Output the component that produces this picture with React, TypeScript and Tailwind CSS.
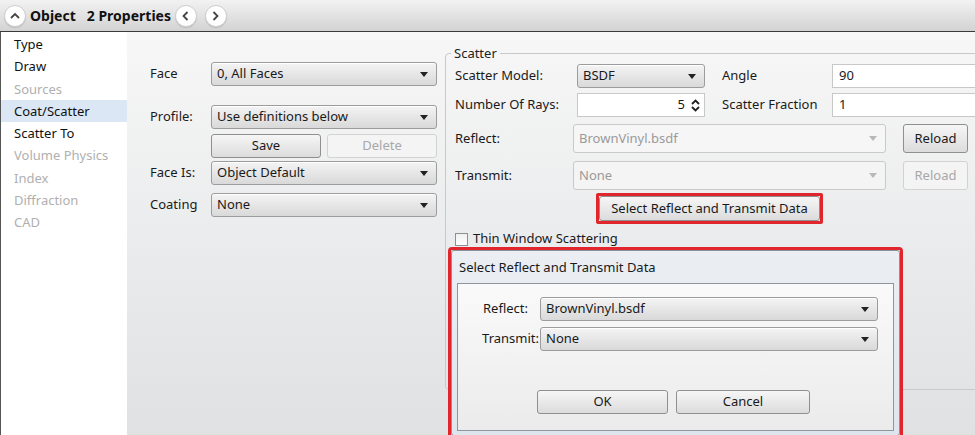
import React from "react";

const F = { fontFamily: '"Noto Sans", "Open Sans", sans-serif' };

function Arrow({ disabled }: { disabled?: boolean }) {
  return (
    <svg width="8" height="5" viewBox="0 0 8 5" className="shrink-0">
      <path d="M0 0 L8 0 L4 5 Z" fill={disabled ? "#b8b8b8" : "#222"} />
    </svg>
  );
}

function Combo({
  value,
  className = "",
  disabled,
}: {
  value: string;
  className?: string;
  disabled?: boolean;
}) {
  return (
    <div
      className={
        "flex items-center justify-between pl-[5px] pr-[8px] rounded-[3px] border " +
        (disabled
          ? "border-[#c9c9c9] bg-[#f4f4f4] text-[#9a9a9a] "
          : "border-[#9c9c9c] bg-gradient-to-b from-[#f4f4f4] to-[#d9d9d9] text-[#1a1a1a] shadow-[inset_0_1px_0_#ffffff] ") +
        className
      }
    >
      <span>{value}</span>
      <Arrow disabled={disabled} />
    </div>
  );
}

function Btn({
  label,
  className = "",
  disabled,
}: {
  label: string;
  className?: string;
  disabled?: boolean;
}) {
  return (
    <div
      className={
        "flex items-center justify-center rounded-[3px] border " +
        (disabled
          ? "border-[#d2d2d2] bg-[#f4f4f4] text-[#a8a8a8] "
          : "border-[#8f8f8f] bg-gradient-to-b from-[#f6f6f6] to-[#dcdcdc] text-[#1a1a1a] ") +
        className
      }
    >
      {label}
    </div>
  );
}

function Circle({ children }: { children: React.ReactNode }) {
  return (
    <div className="w-[22px] h-[22px] rounded-full bg-white border border-[#cfcfcf] flex items-center justify-center shadow-[0_1px_1px_rgba(0,0,0,0.12)]">
      {children}
    </div>
  );
}

export default function App() {
  const items: [string, string][] = [
    ["Type", "n"],
    ["Draw", "n"],
    ["Sources", "d"],
    ["Coat/Scatter", "s"],
    ["Scatter To", "n"],
    ["Volume Physics", "d"],
    ["Index", "d"],
    ["Diffraction", "d"],
    ["CAD", "d"],
  ];
  return (
    <div
      style={F}
      className="relative w-[975px] h-[435px] overflow-hidden flex flex-col text-[13px] text-[#1a1a1a] bg-white"
    >
      {/* header */}
      <div className="h-[31px] shrink-0 flex items-center pl-[4px] bg-gradient-to-b from-[#f2f2f2] to-[#d3d3d3]">
        <Circle>
          <svg width="10" height="7" viewBox="0 0 10 7">
            <path d="M1 6 L5 2 L9 6" stroke="#444" strokeWidth="1.8" fill="none" />
          </svg>
        </Circle>
        <span className="ml-[4px] font-bold text-[14px] text-[#111]">Object</span>
        <span className="ml-[11px] font-bold text-[14px] text-[#111]">2 Properties</span>
        <div className="ml-[4px] flex gap-[8px]">
          <Circle>
            <svg width="7" height="10" viewBox="0 0 7 10">
              <path d="M5.5 1 L1.5 5 L5.5 9" stroke="#444" strokeWidth="1.8" fill="none" />
            </svg>
          </Circle>
          <Circle>
            <svg width="7" height="10" viewBox="0 0 7 10">
              <path d="M1.5 1 L5.5 5 L1.5 9" stroke="#444" strokeWidth="1.8" fill="none" />
            </svg>
          </Circle>
        </div>
      </div>

      {/* body */}
      <div className="flex flex-1 border-t border-[#3a3a3a]">
        {/* left list */}
        <div className="w-[127px] shrink-0 bg-white border-l border-[#555] pt-[1px]">
          {items.map(([t, k]) => (
            <div
              key={t}
              className={
                "h-[22.3px] leading-[22px] pl-[13px] " +
                (k === "s"
                  ? "bg-[#dce7f5] text-[#111]"
                  : k === "d"
                  ? "text-[#b0b0b0]"
                  : "text-[#111]")
              }
            >
              {t}
            </div>
          ))}
        </div>

        {/* main area */}
        <div className="flex flex-1 bg-gradient-to-b from-[#f7f7f7] to-[#dfe1e3]">
          {/* middle form */}
          <div className="w-[318px] shrink-0 pt-[30px] pl-[23px]">
            <div className="flex items-center h-[24px]">
              <span className="w-[61px]">Face</span>
              <Combo value="0, All Faces" className="w-[226px] h-[24px]" />
            </div>
            <div className="flex items-center h-[24px] mt-[19px]">
              <span className="w-[61px]">Profile:</span>
              <Combo value="Use definitions below" className="w-[226px] h-[24px]" />
            </div>
            <div className="flex h-[24px] mt-[5px] ml-[61px] gap-[6px]">
              <Btn label="Save" className="w-[110px] h-[24px]" />
              <Btn label="Delete" disabled className="w-[110px] h-[24px]" />
            </div>
            <div className="flex items-center h-[24px] mt-[3px]">
              <span className="w-[61px]">Face Is:</span>
              <Combo value="Object Default" className="w-[226px] h-[24px]" />
            </div>
            <div className="flex items-center h-[24px] mt-[8px]">
              <span className="w-[61px]">Coating</span>
              <Combo value="None" className="w-[226px] h-[24px]" />
            </div>
          </div>

          {/* scatter group */}
          <div className="flex-1 min-w-0">
            <fieldset className="mt-[12px] h-[346px] w-[560px] border border-[#c9c9c9] rounded-[4px] pl-[9px] pr-0">
              <legend className="ml-[-4px] px-[3px] leading-[18px] text-[#222]">Scatter</legend>
              <div className="flex items-center h-[24px] mt-[2px]">
                <span className="w-[122px]">Scatter Model:</span>
                <Combo value="BSDF" className="w-[128px] h-[24px]" />
                <span className="ml-[17px] w-[110px]">Angle</span>
                <div className="w-[160px] h-[24px] bg-white border border-[#c8c8c8] flex items-center pl-[6px]">90</div>
              </div>
              <div className="flex items-center h-[24px] mt-[5px]">
                <span className="w-[122px]">Number Of Rays:</span>
                <div className="w-[128px] h-[24px] bg-white border border-[#c8c8c8] flex items-center justify-end pr-[4px] gap-[6px]">
                  <span>5</span>
                  <svg width="9" height="13" viewBox="0 0 9 13">
                    <path d="M1 5 L4.5 1.5 L8 5" stroke="#222" strokeWidth="1.8" fill="none" />
                    <path d="M1 8 L4.5 11.5 L8 8" stroke="#222" strokeWidth="1.8" fill="none" />
                  </svg>
                </div>
                <span className="ml-[17px] w-[110px]">Scatter Fraction</span>
                <div className="w-[160px] h-[24px] bg-white border border-[#c8c8c8] flex items-center pl-[6px]">1</div>
              </div>
              <div className="flex items-center h-[29px] mt-[7px]">
                <span className="w-[118px]">Reflect:</span>
                <Combo value="BrownVinyl.bsdf" disabled className="w-[313px] h-[29px] bg-[#f6f6f6]" />
                <Btn label="Reload" className="ml-[17px] w-[65px] h-[29px]" />
              </div>
              <div className="flex items-center h-[29px] mt-[8px]">
                <span className="w-[118px]">Transmit:</span>
                <Combo value="None" disabled className="w-[313px] h-[29px]" />
                <Btn label="Reload" disabled className="ml-[17px] w-[65px] h-[29px]" />
              </div>
              <div className="ml-[141px] mt-[3px] w-[227px] h-[31px] border-[3px] border-[#e0262c] rounded-[2px] flex">
                <Btn label="Select Reflect and Transmit Data" className="flex-1 rounded-[2px]" />
              </div>
              <div className="flex items-center mt-[8px] h-[14px]">
                <div className="w-[13px] h-[13px] border border-[#8e8f8f] bg-gradient-to-b from-[#f0f0f0] to-[#ffffff]" />
                <span className="ml-[5px]">Thin Window Scattering</span>
              </div>
            </fieldset>
          </div>
        </div>
      </div>

      {/* dialog overlay */}
      <div className="absolute left-[448px] top-[247px] w-[455px] h-[192px] border-[3px] border-[#e0262c] rounded-[4px] bg-[#e3e8ee]">
        <div className="h-full border border-[#8a929c] rounded-[3px] bg-gradient-to-b from-[#ebeff4] to-[#dfe5ec] px-[5px] flex flex-col">
          <div className="h-[32px] flex items-center pl-[2px] pt-[1px] text-[#1a1a1a]">Select Reflect and Transmit Data</div>
          <div className="flex-1 mb-[4px] border border-[#8e959e] bg-gradient-to-b from-[#fafafa] to-[#ebebeb] pt-[13px]">
            <div className="flex items-center h-[24px]">
              <span className="w-[71px] text-right pr-[1px]">Reflect:</span>
              <Combo value="BrownVinyl.bsdf" className="ml-[11px] w-[338px] h-[24px]" />
            </div>
            <div className="flex items-center h-[24px] mt-[6px]">
              <span className="w-[82px] text-right pr-[1px]">Transmit:</span>
              <Combo value="None" className="w-[338px] h-[24px]" />
            </div>
            <div className="flex gap-[8px] ml-[79px] mt-[39px]">
              <Btn label="OK" className="w-[131px] h-[24px]" />
              <Btn label="Cancel" className="w-[134px] h-[24px]" />
            </div>
          </div>
        </div>
      </div>
    </div>
  );
}
